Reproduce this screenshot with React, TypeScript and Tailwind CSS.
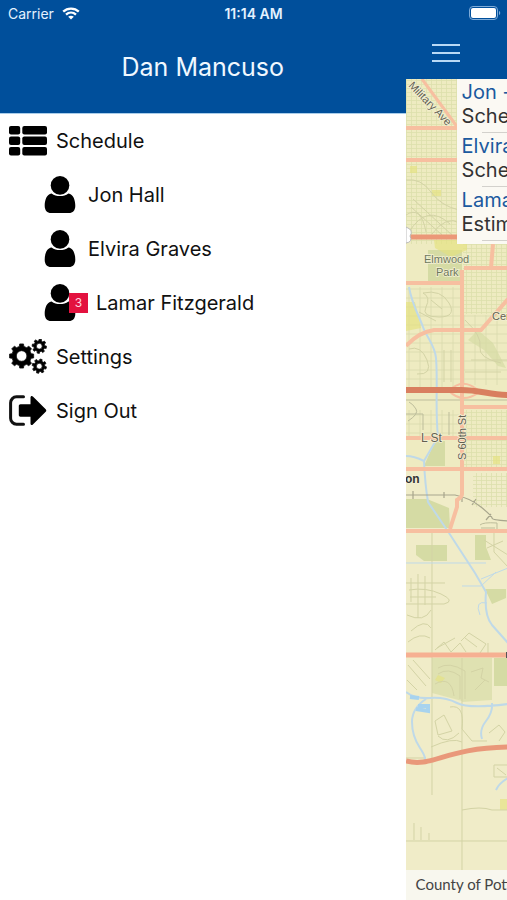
import React from "react";

function gearPath(cx: number, cy: number, outer: number, root: number, hole: number, teeth: number, turn: number) {
  const step = (Math.PI * 2) / teeth;
  const points: string[] = [];
  for (let i = 0; i < teeth; i++) {
    const mid = i * step + turn;
    const corners: [number, number][] = [
      [root, -0.3],
      [outer, -0.2],
      [outer, 0.2],
      [root, 0.3],
    ];
    for (const [r, offset] of corners) {
      const angle = mid + offset * step;
      points.push(`${(cx + r * Math.cos(angle)).toFixed(2)} ${(cy + r * Math.sin(angle)).toFixed(2)}`);
    }
  }
  const ring = `M${cx - hole} ${cy}a${hole} ${hole} 0 1 0 ${hole * 2} 0a${hole} ${hole} 0 1 0 ${-hole * 2} 0Z`;
  return `M${points.join("L")}Z${ring}`;
}

function ListIcon() {
  return (
    <svg className="h-8 w-[38px] shrink-0" viewBox="0 0 38 32" aria-hidden="true">
      {[1, 11.5, 22].map((y) => (
        <g key={y}>
          <rect x="0" y={y} width="11.2" height="8.4" rx="2" />
          <rect x="13.300" y={y} width="24.700" height="8.400" rx="2" />
        </g>
      ))}
    </svg>
  );
}

function PersonIcon() {
  return (
    <svg className="h-[38px] w-8 shrink-0" viewBox="0 0 32 38" aria-hidden="true">
      <circle cx="16" cy="9.4" r="9.3" />
      <path d="M7.6 17.4C2.600 18 .7 24.100 .7 29.800c0 4.700 2.600 7.300 6.300 7.300h18c3.700 0 6.300-2.600 6.300-7.300 0-5.700-1.900-11.800-6.900-12.400C22 19.200 19.300 20.100 16 20.100S10 19.200 7.600 17.400Z" />
    </svg>
  );
}

function GearsIcon() {
  return (
    <svg className="h-9 w-[38px] shrink-0" viewBox="0 0 38 36" fillRule="evenodd" aria-hidden="true" strokeLinejoin="round" stroke="currentColor" strokeWidth="0.8">
      <path d={gearPath(12.6, 17, 12.2, 9.8, 5.3, 8, 0)} />
      <path d={gearPath(30.3, 7.2, 7.2, 5.5, 2.9, 8, 0.15)} />
      <path d={gearPath(30.3, 27.2, 7.2, 5.5, 2.9, 8, 0.25)} />
    </svg>
  );
}

function SignOutIcon() {
  return (
    <svg className="h-8 w-[38px] shrink-0" viewBox="0 0 38 32" aria-hidden="true">
      <path d="M14.500 1.800H7.500A6 6 0 0 0 1.600 7.800V23.200A6 6 0 0 0 7.500 29.200H14.500" fill="none" stroke="currentColor" strokeWidth="3" strokeLinecap="round" />
      <path d="M11.500 9.300H21.500V2.500c0-1.500 1.300-2 2.400-1L36.700 14.200c.8.800.8 1.800 0 2.600L23.900 29.500c-1.100 1-2.400.5-2.400-1V21.700H11.500c-1.100 0-1.700-.7-1.700-1.700V11c0-1 .6-1.700 1.700-1.700Z" />
    </svg>
  );
}

function StatusBar() {
  return (
    <div className="grid h-7 grid-cols-[1fr_auto_1fr] items-center bg-[#004f9b] px-[8px] pb-[2px] text-[14px] text-[#e4f2ff]">
      <div className="flex items-center gap-[8px]">
        <span>Carrier</span>
        <svg className="h-[13px] w-[18px]" viewBox="0 0 18 13" fill="none" stroke="#fff" strokeWidth="2.300" aria-hidden="true">
          <path d="M1.200 4.700C5.500.6 12.500.6 16.800 4.700" />
          <path d="M4 7.700C6.900 5 11.100 5 14 7.700" />
          <path d="M9 12.600 6.200 9.800C7.700 8.400 10.300 8.400 11.800 9.800Z" fill="#fff" stroke="none" />
        </svg>
      </div>
      <span className="font-semibold">11:14 AM</span>
      <svg className="-mr-[2px] h-[14px] w-8 justify-self-end" viewBox="0 0 32 14" aria-hidden="true">
        <rect x="0.500" y="0.500" width="28" height="13" rx="3.500" fill="none" stroke="#7eabd8" />
        <rect x="2" y="2" width="25" height="10" rx="2" fill="#fff" />
        <path d="M30 5c1.600.3 1.600 3.700 0 4Z" fill="#7eabd8" />
      </svg>
    </div>
  );
}

const people = [
  { name: "Jon Hall", unread: 0 },
  { name: "Elvira Graves", unread: 0 },
  { name: "Lamar Fitzgerald", unread: 3 },
];

const rowClass = "flex h-[54px] w-full items-center text-left text-[20px] leading-6 text-[#111]";

function Drawer() {
  return (
    <aside className="w-4/5 shrink-0 bg-white">
      <header className="flex h-[86px] items-center justify-center border-b border-[#a9cdea] bg-[#004f9b] pb-[7px]">
        <h1 className="text-[25px] leading-8 text-[#f0f8ff]">Dan Mancuso</h1>
      </header>
      <nav aria-label="Main">
        <button type="button" className={`${rowClass} gap-[9px] pl-[9px]`}>
          <ListIcon />
          Schedule
        </button>
        {people.map((person) => (
          <button key={person.name} type="button" className={`${rowClass} pl-11`}>
            <PersonIcon />
            {person.unread > 0 ? (
              <span className="z-10 -ml-[7px] mr-2 flex h-5 w-[19px] items-center justify-center bg-[#e3123f] text-[12px] text-[#ffd9e0]">
                {person.unread}
              </span>
            ) : (
              <span className="w-3" />
            )}
            {person.name}
          </button>
        ))}
        <button type="button" className={`${rowClass} gap-[9px] pl-[9px]`}>
          <GearsIcon />
          Settings
        </button>
        <button type="button" className={`${rowClass} gap-[9px] pl-[9px]`}>
          <SignOutIcon />
          Sign Out
        </button>
      </nav>
    </aside>
  );
}

function StreetMap() {
  return (
    <svg className="absolute inset-0 h-full w-full" viewBox="405 79 102 821" preserveAspectRatio="xMinYMin slice" role="img" aria-label="Street map">
      <defs>
        <pattern id="blocks" width="5" height="4" patternUnits="userSpaceOnUse">
          <path d="M0 .5H5M.5 0V4" stroke="#dcdfac" strokeWidth="0.8" fill="none" />
        </pattern>
        <pattern id="wide" width="11" height="9" patternUnits="userSpaceOnUse">
          <path d="M0 1H11M1 0V9" stroke="#d8d9ac" strokeWidth="0.8" fill="none" />
        </pattern>
      </defs>
      <rect x="405" y="79" width="102" height="821" fill="#f0ecc8" />
      <rect x="405" y="79" width="102" height="390" fill="#eeebc1" />
      <rect x="405" y="79" width="56" height="165" fill="url(#blocks)" />
      <rect x="462" y="244" width="45" height="70" fill="url(#blocks)" />
      <rect x="462" y="315" width="45" height="70" fill="url(#wide)" />
      <rect x="405" y="287" width="56" height="100" fill="url(#wide)" />
      <rect x="462" y="410" width="45" height="58" fill="url(#blocks)" />
      <rect x="472" y="473" width="35" height="34" fill="url(#blocks)" />
      <rect x="405" y="410" width="56" height="26" fill="url(#wide)" />

      <g fill="#d5dba4">
        <path d="M427 250H461V282H427Z" />
        <path d="M405 499H426L448 508 449 528H405Z" />
        <path d="M434 441H444V466H423Z" />
        <path d="M415 545H446V561H423L415 555Z" />
        <path d="M474 535H485V547L490 560H474Z" />
        <path d="M431 658H461V701L431 693Z" opacity="0.650" />
        <path d="M461 658H491V700L461 702Z" opacity="0.650" />
        <path d="M493 658H507V686H493Z" />
        <path d="M484 589H505V598L491 604Z" />
        <path d="M467 340 477 330 492 343 505 368 497 366 483 350Z" opacity="0.700" />
      </g>
      <g fill="#e5e27f" opacity="0.650">
        <path d="M405 302H414L420 328 405 331Z" />
        <path d="M433 240H466V250L450 257 434 248Z" />
        <rect x="431" y="190" width="9" height="6" />
        <rect x="409" y="166" width="7" height="7" />
        <rect x="492" y="456" width="7" height="8" />
        <path d="M437 675 444 678 440 683 434 680Z" />
        <path d="M499 799H507V810H499Z" />
      </g>

      <g fill="none" stroke="#d3d3a5" strokeWidth="1">
        <path d="M405 180Q420 178 430 192T458 210M408 232Q426 203 449 224M410 207 441 235M412 199 452 236M431 234Q445 215 459 223M405 215Q420 205 425 232" />
        <path d="M422 293Q440 289 448 303T438 317 425 307 422 293M430 300 441 309M418 312 435 321M408 349Q420 345 426 360T416 374M443 350V382M450 350V382M464 320Q481 336 479 347T500 363M470 360H507M464 372H500" />
        <path d="M405 583H444M408 590Q425 587 440 594T443 604H405M409 597H435M410 578V602M417 574V618M424 576V605M431 533V795M406 615Q423 623 430 610M410 631Q424 618 430 628M407 642Q419 632 429 638" />
        <path d="M434 650 443 642 450 652 459 643 465 652M460 641 468 633 485 644 479 653M464 638 476 647M487 643V654M436 648 454 638" />
        <path d="M407 665 425 686M412 660 429 679M406 680 416 690M437 668Q448 661 464 671V699M437 674Q447 667 459 676V699M434 684Q450 675 453 696M470 672 482 668 480 678 488 682M474 690 484 680" />
        <path d="M434 721 443 715 451 731 437 735ZM449 707Q464 704 461 729L471 741H486M430 747Q452 737 461 742M488 733 498 725 504 732 498 741M437 736Q446 745 458 733M493 765H507V777H493ZM496 768 505 775" />
        <path d="M461 658V870M461 810Q480 806 491 810H507M405 841H507M405 758H425M413 823V840M420 827V840M428 833V840M405 532H507M483 540 507 555M493 533V552L507 567M486 548 502 541" />
        <path d="M479 525Q482 522 496 523V532M480 528H494M405 414H422V430M448 412V435M405 400H507M407 421Q418 414 415 409T408 402" stroke="#bdbd9b" />
      </g>

      <g fill="none" stroke="#bfd9e8" strokeWidth="2">
        <path d="M408 287C411 305 419 318 422 327S434 345 435 358C437 380 434 411 437 437L423 461Q424 484 427 502L448 533 474 573 485 592Q483 615 491 625L507 643M405 456Q413 456 423 461" />
        <path d="M405 563H485M480 579 507 568M461 586H480L495 572M486 603Q473 600 479 615" strokeWidth="1" />
        <path d="M405 692Q414 699 429 698T456 703 507 704M491 703Q492 712 485 721T481 739M425 699Q411 708 411 722T419 748 422 761M495 790Q498 783 507 778" />
        <path d="M409 697 418 698M417 706 427 706 427 711 415 709" stroke="#a8d3ee" strokeWidth="4" />
      </g>

      <path d="M405 495H454Q469 498 480 507T491 518 507 521M412 491V499M443 492V498M461 493V502M475 499 471 505M490 514 485 520" fill="none" stroke="#a8a68d" strokeWidth="1.200" />

      <g fill="none" stroke="#f7bfa0" strokeWidth="4">
        <path d="M405 128H457M405 160H457M405 283H462M461 270V494Q461 497 456 500V507L449 529M463 268H507M492 244 490 268M405 346Q418 332 433 330H480L507 299M461 407H507M405 438H507M405 469H507M405 531H507" />
        <path d="M421 79 457 128" strokeWidth="3" />
        <path d="M405 655H507" stroke="#f6b092" strokeWidth="5" />
        <path d="M448 391Q461 377 477 390M448 391Q461 404 477 393" strokeWidth="2" />
      </g>
      <g fill="none" stroke="#d97f5f">
        <path d="M405 237H461" stroke="#eb9878" strokeWidth="5" />
        <path d="M405 390H460C480 390 488 395 507 395" strokeWidth="6" />
        <path d="M405 761C431 768 444 748 507 747" strokeWidth="5" stroke="#e9987a" />
      </g>
      <path d="M405 227Q413 230 409 236 412 242 405 243Z" fill="#fff" stroke="#bbb" />
      <rect x="505" y="652" width="2" height="6" fill="#555" />

      <g fontFamily="'Liberation Sans', Arial, sans-serif" fontSize="11" fill="#625f50" stroke="#f4f0d5" strokeWidth="1.500" paintOrder="stroke">
        <text transform="translate(407 86) rotate(46)">Military Ave</text>
        <text x="423" y="263" fill="#6d785c">Elmwood</text>
        <text x="435" y="276" fill="#6d785c">Park</text>
        <text x="491" y="320">Cen</text>
        <text x="420" y="442" fontSize="12">L St</text>
        <text transform="translate(465 460) rotate(-90)">S 60th St</text>
        <text x="404" y="483" fontSize="12" fontWeight="700" fill="#333">on</text>
      </g>
    </svg>
  );
}

const stops = [
  { person: "Jon - ", detail: "Scheduled" },
  { person: "Elvira - ", detail: "Scheduled" },
  { person: "Lamar - ", detail: "Estimated" },
];

function MapScreen() {
  return (
    <main className="flex min-w-0 flex-1 flex-col overflow-hidden">
      <header className="flex h-[51px] shrink-0 items-center bg-[#004f9b] pb-[2px] pl-[26px]">
        <button type="button" aria-label="Menu" className="flex w-7 flex-col gap-[6px]">
          <span className="h-[2px] w-full bg-[#b9d9f5]" />
          <span className="h-[2px] w-full bg-[#b9d9f5]" />
          <span className="h-[2px] w-full bg-[#b9d9f5]" />
        </button>
      </header>
      <div className="relative flex flex-1 flex-col justify-between overflow-hidden">
        <StreetMap />
        <ul className="relative ml-[51px] bg-[#fbf9f3] pb-[3px] text-[20px] leading-6 whitespace-nowrap">
          {stops.map((stop) => (
            <li key={stop.person} className="flex h-[54px] flex-col pt-px pl-[5px]">
              <span className="whitespace-pre text-[#1b5a9f]">{stop.person}</span>
              <span className="text-[#333]">{stop.detail}</span>
              <span className="mt-1 ml-5 h-px bg-[#d3d1cc]" />
            </li>
          ))}
        </ul>
        <footer className="relative flex h-[30px] items-center bg-[#f8f7ee] pb-px pl-[10px] font-['Lato',sans-serif] text-[15px] whitespace-nowrap text-[#444]">
          County of Pottawattamie
        </footer>
      </div>
    </main>
  );
}

export default function App() {
  return (
    <div className="flex min-h-screen flex-col bg-white font-['Inter','Liberation_Sans',sans-serif]">
      <StatusBar />
      <div className="flex flex-1">
        <Drawer />
        <MapScreen />
      </div>
    </div>
  );
}
